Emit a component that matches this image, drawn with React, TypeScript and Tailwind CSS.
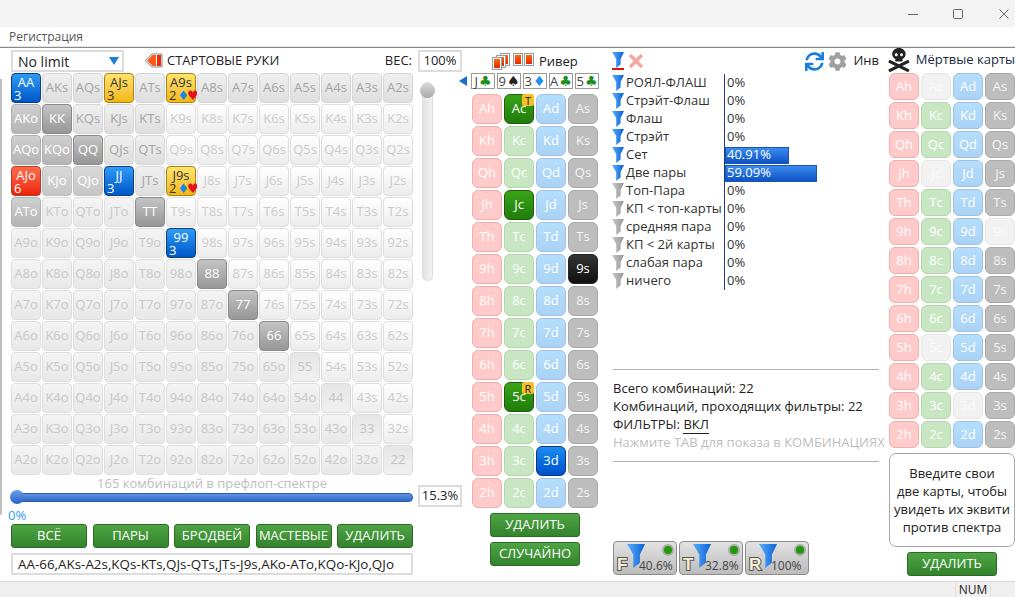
import { FaCog, FaSkullCrossbones, FaSync } from "react-icons/fa";

const ranks = ["A", "K", "Q", "J", "T", "9", "8", "7", "6", "5", "4", "3", "2"];

const handStyles = {
  blue: "bg-linear-to-b from-[#2f9bf5] to-[#0056c8] border-[#0b3f7f] text-white",
  yellow: "bg-linear-to-b from-[#ffe36b] to-[#f2b705] border-[#a8801a] text-[#333]",
  red: "bg-linear-to-b from-[#ff6a4a] to-[#f01c00] border-[#b33a2a] text-white",
  dark: "bg-linear-to-b from-[#c4c4c4] to-[#979797] border-[#8a8a8a] text-white",
  mid: "bg-linear-to-b from-[#d0d0d0] to-[#b4b4b4] border-[#b0b0b0] text-white",
  soft: "bg-linear-to-b from-[#d8d8d8] to-[#c6c6c6] border-[#c0c0c0] text-white",
  inRange: "bg-linear-to-b from-[#f0f0f0] to-[#dedede] border-[#d6d6d6] text-[#a4a4a4]",
  lowPair: "bg-linear-to-b from-[#e6e6e6] to-[#f0f0f0] border-[#dcdcdc] text-[#c4c4c4]",
  suited: "bg-linear-to-b from-[#ffffff] to-[#ececec] border-[#dedede] text-[#cccccc]",
  off: "bg-linear-to-b from-[#f4f4f4] to-[#e8e8e8] border-[#dedede] text-[#c8c8c8]",
};

type HandKind = keyof typeof handStyles;

const special: Record<string, { kind: HandKind; count: string; suits?: boolean }> = {
  AA: { kind: "blue", count: "3" },
  JJ: { kind: "blue", count: "3" },
  "99": { kind: "blue", count: "3" },
  AJs: { kind: "yellow", count: "3" },
  A9s: { kind: "yellow", count: "2", suits: true },
  J9s: { kind: "yellow", count: "2", suits: true },
  AJo: { kind: "red", count: "6" },
};

function handKind(name: string): HandKind {
  if (["KK", "QQ", "TT", "88", "77", "66"].includes(name)) return "dark";
  if (["AKo", "AQo", "ATo", "KQo"].includes(name)) return "mid";
  if (["KJo", "QJo"].includes(name)) return "soft";
  if (["55", "44", "33", "22"].includes(name)) return "lowPair";
  if (["AKs", "AQs", "ATs", "A8s", "A7s", "A6s", "A5s", "A4s", "A3s", "A2s", "KQs", "KJs", "KTs", "QJs", "QTs", "JTs"].includes(name)) return "inRange";
  return name.endsWith("s") ? "suited" : "off";
}

function HandCell({ name }: { name: string }) {
  const hit = special[name];
  if (hit) {
    return (
      <div className={`flex h-[30px] w-[30px] flex-col rounded-[4px] border px-[2px] pt-[2px] text-[13px] leading-[13px] ${handStyles[hit.kind]}`}>
        <div className="text-center">{name}</div>
        <div className="flex items-center leading-[13px]">
          <span>{hit.count}</span>
          {hit.suits && (
            <span className="ml-px font-['DejaVu_Sans'] text-[13px] leading-[12px] tracking-[-2px]">
              <span className="text-[#1585e8]">♦</span>
              <span className="text-[#e8101a]">♥</span>
            </span>
          )}
        </div>
      </div>
    );
  }
  return (
    <div className={`flex h-[30px] w-[30px] items-center justify-center rounded-[4px] border text-[13px] ${handStyles[handKind(name)]}`}>
      {name}
    </div>
  );
}

function GreenButton({ label, className }: { label: string; className: string }) {
  return (
    <button className={`flex h-[24px] items-center justify-center whitespace-nowrap rounded-[3px] border border-[#2c6a25] bg-linear-to-b from-[#4ea544] to-[#33832c] text-[13px] text-white ${className}`}>
      {label}
    </button>
  );
}

function Funnel({ gray, size = 12 }: { gray?: boolean; size?: number }) {
  const id = gray ? "funnel-gray" : "funnel-blue";
  return (
    <svg width={size} height={(size * 16) / 12} viewBox="0 0 12 16" className="shrink-0">
      <defs>
        <linearGradient id={id} x1="0" y1="0" x2="1" y2="0">
          <stop offset="0" stopColor={gray ? "#c8c8c8" : "#58b0f8"} />
          <stop offset="1" stopColor={gray ? "#989898" : "#0a60d8"} />
        </linearGradient>
      </defs>
      <path d="M0 0H12L8.6 7V12.5L4.2 16V7Z" fill={`url(#${id})`} />
    </svg>
  );
}

const suitCards = {
  h: "bg-[#ffcaca] border-[#f2adad] text-[#fff]",
  c: "bg-[#c8e6c2] border-[#b3d6ac] text-[#fff]",
  d: "bg-linear-to-b from-[#b5defc] to-[#aad2f5] border-[#9fc2e4] text-[#fff]",
  s: "bg-[#bdbdbd] border-[#a9a9a9] text-[#f4f4f4]",
};

const pickedCards = {
  h: "bg-[#e8262a] border-[#a01010] text-white",
  c: "bg-linear-to-b from-[#3aa317] to-[#1f7d0a] border-[#1f5c10] text-white",
  d: "bg-linear-to-b from-[#1e8cf0] to-[#0050cc] border-[#0b3a80] text-white",
  s: "bg-linear-to-b from-[#333333] to-[#111111] border-[#222222] text-white",
};

function Card({ name, picked, dead, badge, height }: { name: string; picked?: boolean; dead?: boolean; badge?: string; height: string }) {
  const suit = name[1] as keyof typeof suitCards;
  const look = dead ? "bg-[#f2f2f2] border-[#e6e6e6] text-[#fbfbfb]" : picked ? pickedCards[suit] : suitCards[suit];
  return (
    <div className={`relative flex w-[30px] items-center justify-center rounded-[6px] border text-[13px] ${height} ${look}`}>
      {name}
      {badge && (
        <span className="absolute -right-px -top-px flex h-[12px] w-[12px] items-center justify-center rounded-[2px] bg-[#f5c02e] text-[11px] leading-none text-[#222]">
          {badge}
        </span>
      )}
    </div>
  );
}

function BoardChip({ rank, suit, color }: { rank: string; suit: string; color: string }) {
  return (
    <div className="flex h-[16px] w-[24px] items-center justify-center gap-px border border-[#9a9a9a] text-[13px] leading-none text-[#444]">
      {rank}
      <span className={`font-['DejaVu_Sans'] text-[14px] leading-none ${color}`}>{suit}</span>
    </div>
  );
}

function CardStack() {
  const red = "h-[13px] w-[10px] border border-[#9a9a9a] bg-linear-to-b from-[#ff6a10] to-[#e01a00] shadow-[inset_0_0_0_1px_#fff]";
  return (
    <div className="flex items-start">
      <div className="relative h-[17px] w-[19px]">
        <div className={`absolute left-[8px] top-0 ${red}`} />
        <div className={`absolute left-[4px] top-[2px] ${red}`} />
        <div className={`absolute left-0 top-[4px] ${red}`} />
      </div>
      <div className={`ml-[2px] ${red}`} />
      <div className={`ml-px ${red}`} />
    </div>
  );
}

const stats: { label: string; value: string; on?: boolean; bar?: string }[] = [
  { label: "РОЯЛ-ФЛАШ", value: "0%", on: true },
  { label: "Стрэйт-Флаш", value: "0%", on: true },
  { label: "Флаш", value: "0%", on: true },
  { label: "Стрэйт", value: "0%", on: true },
  { label: "Сет", value: "40.91%", on: true, bar: "w-[64px]" },
  { label: "Две пары", value: "59.09%", on: true, bar: "w-[92px]" },
  { label: "Топ-Пара", value: "0%" },
  { label: "КП < топ-карты", value: "0%" },
  { label: "средняя пара", value: "0%" },
  { label: "КП < 2й карты", value: "0%" },
  { label: "слабая пара", value: "0%" },
  { label: "ничего", value: "0%" },
];

function StatRow({ label, value, on, bar }: (typeof stats)[number]) {
  return (
    <div className="flex h-[18px] items-center">
      <div className="flex h-full w-[112px] items-center gap-[2px] whitespace-nowrap text-[13px] text-[#333]">
        <Funnel gray={!on} />
        {label}
      </div>
      <div className="flex h-full flex-1 items-center border-l border-[#1b3f8b] text-[13px] text-[#333]">
        {bar ? (
          <div className={`flex h-[17px] items-center border border-[#1a56b4] bg-linear-to-b from-[#3a8cf0] to-[#0d52c4] pl-[1px] text-white ${bar}`}>
            {value}
          </div>
        ) : (
          <span className="pl-[2px]">{value}</span>
        )}
      </div>
    </div>
  );
}

function FilterBadge({ letter, value }: { letter: string; value: string }) {
  return (
    <div className="relative flex h-[34px] w-[64px] items-start rounded-[4px] border border-[#8c8c8c] bg-linear-to-b from-[#e2e2e2] to-[#bcbcbc] pl-[3px] pt-[2px]">
      <span className="mt-[12px] w-[10px] font-['Liberation_Sans'] text-[17px] font-bold leading-[17px] text-[#f6efd2] [paint-order:stroke_fill] [-webkit-text-stroke:2px_#555]">{letter}</span>
      <Funnel size={18} />
      <span className="ml-[-6px] mt-[14px] text-[12px] leading-[15px] text-[#444]">{value}</span>
      <span className="absolute right-[2px] top-[2px] h-[12px] w-[12px] rounded-full border-2 border-[#aaaaaa] bg-[#1f9a08]" />
    </div>
  );
}

const boardPicked = ["Ac", "Jc", "5c", "9s", "3d"];
const deadCards = ["Ac", "Jc", "5c", "9s", "3d"];

export default function App() {
  return (
    <div className="flex h-[597px] w-[1015px] flex-col overflow-hidden bg-white font-['Open_Sans',sans-serif] text-[#222]">
      {/* title bar */}
      <div className="flex h-[27px] items-center justify-end bg-[#f3f3f3]">
        <svg width="110" height="14" viewBox="0 0 110 14" fill="none" stroke="#666" strokeWidth="1">
          <path d="M3 7.5H13" />
          <rect x="48.5" y="2.5" width="9" height="9" rx="1" />
          <path d="M94.5 2.5L103.5 11.5M103.5 2.5L94.5 11.5" />
        </svg>
      </div>
      {/* menu */}
      <div className="flex h-[20px] items-center border-b border-[#e4e4e4] pl-[9px] text-[12px] text-[#555]">Регистрация</div>
      <div className="h-px bg-[#8a8a8a]" />

      <div className="flex h-[533px]">
        <div className="mt-[31px] h-[436px] w-[2px] rounded-br-[3px] bg-[#bdbdbd]" />

        {/* left: starting hands */}
        <div className="relative ml-[9px] flex w-[451px] flex-col">
          <div className="mt-[2px] flex h-[22px] items-center">
            <div className="flex h-[22px] w-[113px] items-center justify-between border-2 border-[#dcdcdc] pl-[5px] pr-[3px] text-[14px] text-[#222]">
              No limit
              <svg width="10" height="10" viewBox="0 0 10 10">
                <path d="M0 1H10L5 9Z" fill="#1a7fd8" />
              </svg>
            </div>
            <svg width="19" height="16" viewBox="0 0 19 16" className="ml-[20px]">
              <path d="M18 1H8L1 7.5L8 14H18Z" fill="#fff" stroke="#888" />
              <path d="M17 2H13V13H17Z" fill="#e83000" />
              <path d="M12 2H8.5L3 7.5L8.5 13H12Z" fill="#ff5a1a" />
            </svg>
            <span className="ml-[4px] text-[13px] text-[#222]">СТАРТОВЫЕ РУКИ</span>
            <span className="ml-auto text-[13px] text-[#222]">ВЕС:</span>
            <div className="ml-[6px] flex h-[22px] w-[44px] items-center justify-center border-2 border-[#dcdcdc] text-[13px]">100%</div>
          </div>

          <div className="mt-px flex">
            <div className="grid grid-cols-[repeat(13,30px)] grid-rows-[repeat(13,30px)] gap-px">
              {ranks.map((a, i) =>
                ranks.map((b, j) => {
                  const name = i === j ? a + b : i < j ? `${a}${b}s` : `${b}${a}o`;
                  return <HandCell key={name} name={name} />;
                }),
              )}
            </div>
            <div className="relative ml-[9px] mt-[9px] h-[199px] w-[11px] rounded-[5px] border border-[#dcdcdc] bg-linear-to-r from-[#e2e2e2] to-[#f2f2f2]">
              <div className="absolute -left-[3px] top-0 h-[15px] w-[15px] rounded-full bg-linear-to-b from-[#d8d8d8] to-[#a8a8a8]" />
            </div>
          </div>

          <div className="flex">
            <div className="w-[402px]">
              <div className="h-[18px] text-center text-[13px] leading-[17px] text-[#bdbdbd]">165 комбинаций в префлоп-спектре</div>
              <div className="relative h-[9px] rounded-[4px] border border-[#2a5fb0] bg-linear-to-b from-[#5f95e4] to-[#2d66c8]">
                <div className="absolute -left-[2px] -top-[4px] h-[14px] w-[14px] rounded-full bg-linear-to-b from-[#6a9fe8] to-[#2a62c4]" />
              </div>
            </div>
            <div className="ml-[5px] mt-[10px] flex h-[22px] w-[44px] items-center justify-center border-2 border-[#dcdcdc] text-[13px]">15.3%</div>
          </div>

          <div className="-ml-[3px] h-[17px] text-[13px] leading-[17px] text-[#2a9df4]">0%</div>

          <div className="flex w-[402px] justify-between">
            <GreenButton label="ВСЁ" className="w-[76px]" />
            <GreenButton label="ПАРЫ" className="w-[76px]" />
            <GreenButton label="БРОДВЕЙ" className="w-[76px]" />
            <GreenButton label="МАСТЕВЫЕ" className="w-[76px]" />
            <GreenButton label="УДАЛИТЬ" className="w-[76px]" />
          </div>

          <div className="mt-[5px] flex h-[22px] w-[402px] items-center whitespace-nowrap border-2 border-[#dcdcdc] pl-[5px] text-[13.4px] text-[#222]">
            AA-66,AKs-A2s,KQs-KTs,QJs-QTs,JTs-J9s,AKo-ATo,KQo-KJo,QJo
          </div>
        </div>

        {/* board */}
        <div className="-ml-[3px] flex w-[141px] flex-col">
          <div className="mt-[5px] flex h-[17px] items-center pl-[33px]">
            <CardStack />
            <span className="ml-[5px] text-[13px] text-[#222]">Ривер</span>
          </div>
          <div className="mt-[3px] flex items-center">
            <svg width="8" height="10" viewBox="0 0 8 10" className="mr-[4px]">
              <path d="M8 0V10L0 5Z" fill="#1a6fd0" />
            </svg>
            <div className="flex gap-[2px]">
              <BoardChip rank="J" suit="♣" color="text-[#1c8c1c]" />
              <BoardChip rank="9" suit="♠" color="text-[#222]" />
              <BoardChip rank="3" suit="♦" color="text-[#1e90ee]" />
              <BoardChip rank="A" suit="♣" color="text-[#1c8c1c]" />
              <BoardChip rank="5" suit="♣" color="text-[#1c8c1c]" />
            </div>
          </div>
          <div className="ml-[13px] mt-[5px] grid grid-cols-[repeat(4,30px)] gap-[2px]">
            {ranks.map((r) =>
              ["h", "c", "d", "s"].map((s) => {
                const name = r + s;
                return (
                  <Card
                    key={name}
                    name={name}
                    height="h-[30px]"
                    picked={boardPicked.includes(name)}
                    badge={name === "Ac" ? "T" : name === "5c" ? "R" : undefined}
                  />
                );
              }),
            )}
          </div>
          <div className="ml-[31px] mt-[5px] flex w-[90px] flex-col gap-[5px]">
            <GreenButton label="УДАЛИТЬ" className="w-[90px]" />
            <GreenButton label="СЛУЧАЙНО" className="w-[90px]" />
          </div>
        </div>

        {/* hand strength filters */}
        <div className="ml-[12px] flex w-[267px] flex-col">
          <div className="mt-[3px] flex h-[20px] items-center">
            <div className="w-[12px] border-b-2 border-[#e01010]">
              <Funnel size={12} />
            </div>
            <svg width="14" height="14" viewBox="0 0 14 14" className="ml-[5px]" stroke="#f5a8a0" strokeWidth="3.5">
              <path d="M1 1L13 13M13 1L1 13" />
            </svg>
            <FaSync className="ml-auto text-[19px] text-[#1a7fd8]" />
            <FaCog className="ml-[4px] text-[19px] text-[#a0a0a0]" />
            <span className="ml-[6px] text-[13px] text-[#222]">Инв</span>
          </div>
          <div className="mt-[3px]">
            {stats.map((row) => (
              <StatRow key={row.label} {...row} />
            ))}
          </div>
          <div className="ml-px mt-[79px] border-b border-[#b0b0b0]" />
          <div className="ml-px mt-[9px] whitespace-nowrap text-[13px] leading-[18px] text-[#222]">
            <div>Всего комбинаций: 22</div>
            <div>Комбинаций, проходящих фильтры: 22</div>
            <div>
              ФИЛЬТРЫ: <span className="border-b border-[#222]">ВКЛ</span>
            </div>
            <div className="text-[#bdbdbd]">Нажмите ТАВ для показа в КОМБИНАЦИЯХ</div>
          </div>
          <div className="ml-px mt-[10px] border-b border-[#b0b0b0]" />
          <div className="ml-px mt-[79px] flex gap-[2px]">
            <FilterBadge letter="F" value="40.6%" />
            <FilterBadge letter="T" value="32.8%" />
            <FilterBadge letter="R" value="100%" />
          </div>
        </div>

        {/* dead cards */}
        <div className="ml-[8px] flex w-[128px] flex-col">
          <div className="mt-[2px] flex h-[20px] items-center">
            <FaSkullCrossbones className="text-[24px] text-[#222]" />
            <span className="ml-[5px] whitespace-nowrap text-[13px] text-[#1c2a44]">Мёртвые карты</span>
          </div>
          <div className="ml-[2px] mt-[3px] grid grid-cols-[repeat(4,30px)] gap-x-[2px] gap-y-[2px]">
            {ranks.map((r) =>
              ["h", "c", "d", "s"].map((s) => {
                const name = r + s;
                return <Card key={name} name={name} height="h-[27px]" dead={deadCards.includes(name)} />;
              }),
            )}
          </div>
          <div className="ml-[2px] mt-[5px] flex h-[94px] w-[126px] flex-col items-center justify-center rounded-[7px] border border-[#a8a8a8] text-center text-[13px] leading-[18px] text-[#222]">
            <div>Введите свои</div>
            <div>две карты, чтобы</div>
            <div>увидеть их эквити</div>
            <div>против спектра</div>
          </div>
          <GreenButton label="УДАЛИТЬ" className="ml-[20px] mt-[5px] w-[90px]" />
        </div>
      </div>

      {/* status bar */}
      <div className="flex h-[16px] flex-1 justify-end border-t border-[#d8d8d8] bg-[#f0f0f0] pr-[24px]">
        <div className="flex w-[36px] items-center justify-center border-x border-[#dcdcdc] text-[12px] text-[#222]">NUM</div>
      </div>
    </div>
  );
}
